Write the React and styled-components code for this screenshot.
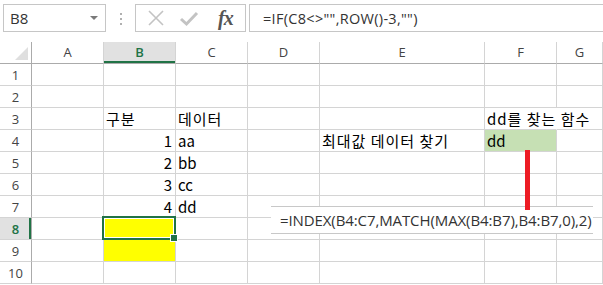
import React from "react";
import styled, { createGlobalStyle } from "styled-components";

const GlobalStyle = createGlobalStyle`
  html, body { margin: 0; padding: 0; background: #fff; overflow: hidden; }
  * { box-sizing: border-box; }
`;

const UI_FONT = `"Open Sans", "Noto Sans", "Noto Sans CJK KR", sans-serif`;
const CELL_FONT = `"Noto Sans CJK KR", "Noto Sans", sans-serif`;
const GRID = "#d4d4d4";
const HEAD_LINE = "#ababab";
const GREEN = "#217346";

const Page = styled.div`
  position: relative;
  width: 603px;
  height: 285px;
  overflow: hidden;
  background: #fff;
`;

const Toolbar = styled.div`
  display: flex;
  align-items: flex-start;
  height: 42px;
  padding: 4px 0 0 3px;
`;

const NameBox = styled.div`
  position: relative;
  display: flex;
  align-items: center;
  width: 103px;
  height: 28px;
  border: 1px solid #c6c6c6;
  padding-left: 6px;
  font-family: ${UI_FONT};
  font-size: 15px;
  color: #333;
`;

const DropArrow = styled.span`
  position: absolute;
  right: 7px;
  top: 11px;
  width: 0;
  height: 0;
  border-left: 4px solid transparent;
  border-right: 4px solid transparent;
  border-top: 4px solid #7a7a7a;
`;

const Dots = styled.div`
  display: flex;
  flex-direction: column;
  align-items: center;
  gap: 3px;
  width: 29px;
  padding-top: 9px;
  span {
    width: 2px;
    height: 2px;
    background: #b0b0b0;
  }
`;

const FxBox = styled.div`
  display: flex;
  align-items: center;
  width: 111px;
  height: 28px;
  border: 1px solid #c6c6c6;
  padding-left: 10px;
  gap: 13px;
`;

const FxText = styled.span`
  font-family: "Liberation Serif", "DejaVu Serif", serif;
  font-style: italic;
  font-weight: bold;
  font-size: 20px;
  color: #555;
  margin-left: 6px;
  letter-spacing: -1px;
`;

const FormulaBar = styled.div`
  flex: 1;
  display: flex;
  align-items: center;
  height: 28px;
  margin-left: 3px;
  border: 1px solid #c6c6c6;
  border-right: none;
  padding-left: 13px;
  font-family: ${UI_FONT};
  font-size: 14.5px;
  letter-spacing: 0.3px;
  color: #333;
  white-space: nowrap;
`;

const Sheet = styled.div`
  display: grid;
  grid-template-columns: 32px 72px 72px 72px 72px 165px 72px 1fr;
  grid-auto-rows: 22px;
`;

const Corner = styled.div`
  position: relative;
  border-right: 1px solid ${HEAD_LINE};
  border-bottom: 1px solid ${HEAD_LINE};
  svg { position: absolute; right: 3px; bottom: 3px; }
`;

const ColHead = styled.div`
  display: flex;
  align-items: center;
  justify-content: center;
  border-right: 1px solid ${GRID};
  border-bottom: 1px solid ${HEAD_LINE};
  font-family: ${UI_FONT};
  font-size: 13px;
  color: ${(p) => (p.$active ? GREEN : "#444")};
  font-weight: ${(p) => (p.$active ? 600 : 400)};
  background: ${(p) => (p.$active ? "#e1e1e1" : "#fff")};
  box-shadow: ${(p) => (p.$active ? `inset 0 -2px 0 ${GREEN}` : "none")};
  padding-bottom: 1px;
`;

const RowHead = styled.div`
  display: flex;
  align-items: center;
  justify-content: center;
  border-right: 1px solid ${HEAD_LINE};
  border-bottom: 1px solid ${GRID};
  font-family: ${UI_FONT};
  font-size: 13px;
  color: ${(p) => (p.$active ? GREEN : "#444")};
  font-weight: ${(p) => (p.$active ? 600 : 400)};
  background: ${(p) => (p.$active ? "#e1e1e1" : "#fff")};
  box-shadow: ${(p) => (p.$active ? `inset -2px 0 0 ${GREEN}` : "none")};
  padding-top: 1px;
`;

const Cell = styled.div`
  position: relative;
  display: flex;
  align-items: flex-end;
  justify-content: ${(p) => (p.$right ? "flex-end" : "flex-start")};
  padding: 0 ${(p) => (p.$right ? "3px" : "0")} 0 ${(p) => (p.$right ? "0" : "2px")};
  border-right: 1px solid ${(p) => (p.$overflow ? "transparent" : GRID)};
  border-bottom: 1px solid ${GRID};
  background: ${(p) => p.$bg || "transparent"};
  font-family: ${CELL_FONT};
  font-size: 15px;
  line-height: 20px;
  letter-spacing: ${(p) => (p.$ko ? "1px" : "0")};
  color: #000;
  white-space: nowrap;
  z-index: ${(p) => (p.$overflow ? 1 : "auto")};
`;

const Selection = styled.div`
  position: absolute;
  left: -2px;
  top: -2px;
  right: -1px;
  bottom: -1px;
  border: 2px solid ${GREEN};
  box-shadow: inset 0 0 0 1px #fff;
  pointer-events: none;
  z-index: 2;
`;

const FillHandle = styled.div`
  position: absolute;
  right: -3px;
  bottom: -3px;
  width: 6px;
  height: 6px;
  background: ${GREEN};
  border: 1px solid #fff;
  box-sizing: content-box;
  margin: -1px;
`;

const RedLine = styled.div`
  position: absolute;
  left: 525px;
  top: 150px;
  width: 5px;
  height: 60px;
  background: #ed1c24;
  z-index: 4;
`;

const Callout = styled.div`
  position: absolute;
  left: 271px;
  top: 206px;
  width: 322px;
  height: 28px;
  display: flex;
  align-items: center;
  padding-left: 9px;
  background: #fff;
  border-top: 1px solid #c8c8c8;
  border-bottom: 1px solid #c8c8c8;
  font-family: ${UI_FONT};
  font-size: 15px;
  letter-spacing: -0.1px;
  color: #333;
  white-space: nowrap;
  z-index: 3;
`;

const COLS = ["A", "B", "C", "D", "E", "F", "G"];
const YELLOW = "#ffff00";
const LIGHT_GREEN = "#c6e0b4";

const data = {
  3: { B: { t: "구분", k: true }, C: { t: "데이터", k: true }, F: { t: "dd를 찾는 함수", o: true, k: true } },
  4: { B: { t: "1", r: true }, C: { t: "aa" }, E: { t: "최대값 데이터 찾기", k: true }, F: { t: "dd", bg: LIGHT_GREEN } },
  5: { B: { t: "2", r: true }, C: { t: "bb" } },
  6: { B: { t: "3", r: true }, C: { t: "cc" } },
  7: { B: { t: "4", r: true }, C: { t: "dd" } },
  8: { B: { t: "", bg: YELLOW, sel: true } },
  9: { B: { t: "", bg: YELLOW } },
};

export default function App() {
  const rows = [1, 2, 3, 4, 5, 6, 7, 8, 9, 10];
  return (
    <Page>
      <GlobalStyle />
      <Toolbar>
        <NameBox>
          B8
          <DropArrow />
        </NameBox>
        <Dots>
          <span />
          <span />
          <span />
        </Dots>
        <FxBox>
          <svg width="20" height="20" viewBox="0 0 20 20">
            <path d="M3 3 L17 17 M17 3 L3 17" stroke="#c3c3c3" strokeWidth="1.6" fill="none" />
          </svg>
          <svg width="20" height="20" viewBox="0 0 20 20">
            <path d="M2 11 L7.5 16 L18 5" stroke="#c3c3c3" strokeWidth="3" fill="none" />
          </svg>
          <FxText>fx</FxText>
        </FxBox>
        <FormulaBar>=IF(C8&lt;&gt;"",ROW()-3,"")</FormulaBar>
      </Toolbar>
      <Sheet>
        <Corner>
          <svg width="13" height="13" viewBox="0 0 13 13">
            <polygon points="13,0 13,13 0,13" fill="#dfdfdf" />
          </svg>
        </Corner>
        {COLS.map((c) => (
          <ColHead key={c} $active={c === "B"}>
            {c}
          </ColHead>
        ))}
        {rows.map((r) => (
          <React.Fragment key={r}>
            <RowHead $active={r === 8}>{r}</RowHead>
            {COLS.map((c) => {
              const d = (data[r] && data[r][c]) || null;
              return (
                <Cell
                  key={c}
                  $right={d && d.r}
                  $bg={d && d.bg}
                  $overflow={d && d.o}
                  $ko={d && d.k}
                >
                  {d && d.t}
                  {d && d.sel && (
                    <Selection>
                      <FillHandle />
                    </Selection>
                  )}
                </Cell>
              );
            })}
          </React.Fragment>
        ))}
      </Sheet>
      <RedLine />
      <Callout>=INDEX(B4:C7,MATCH(MAX(B4:B7),B4:B7,0),2)</Callout>
    </Page>
  );
}
